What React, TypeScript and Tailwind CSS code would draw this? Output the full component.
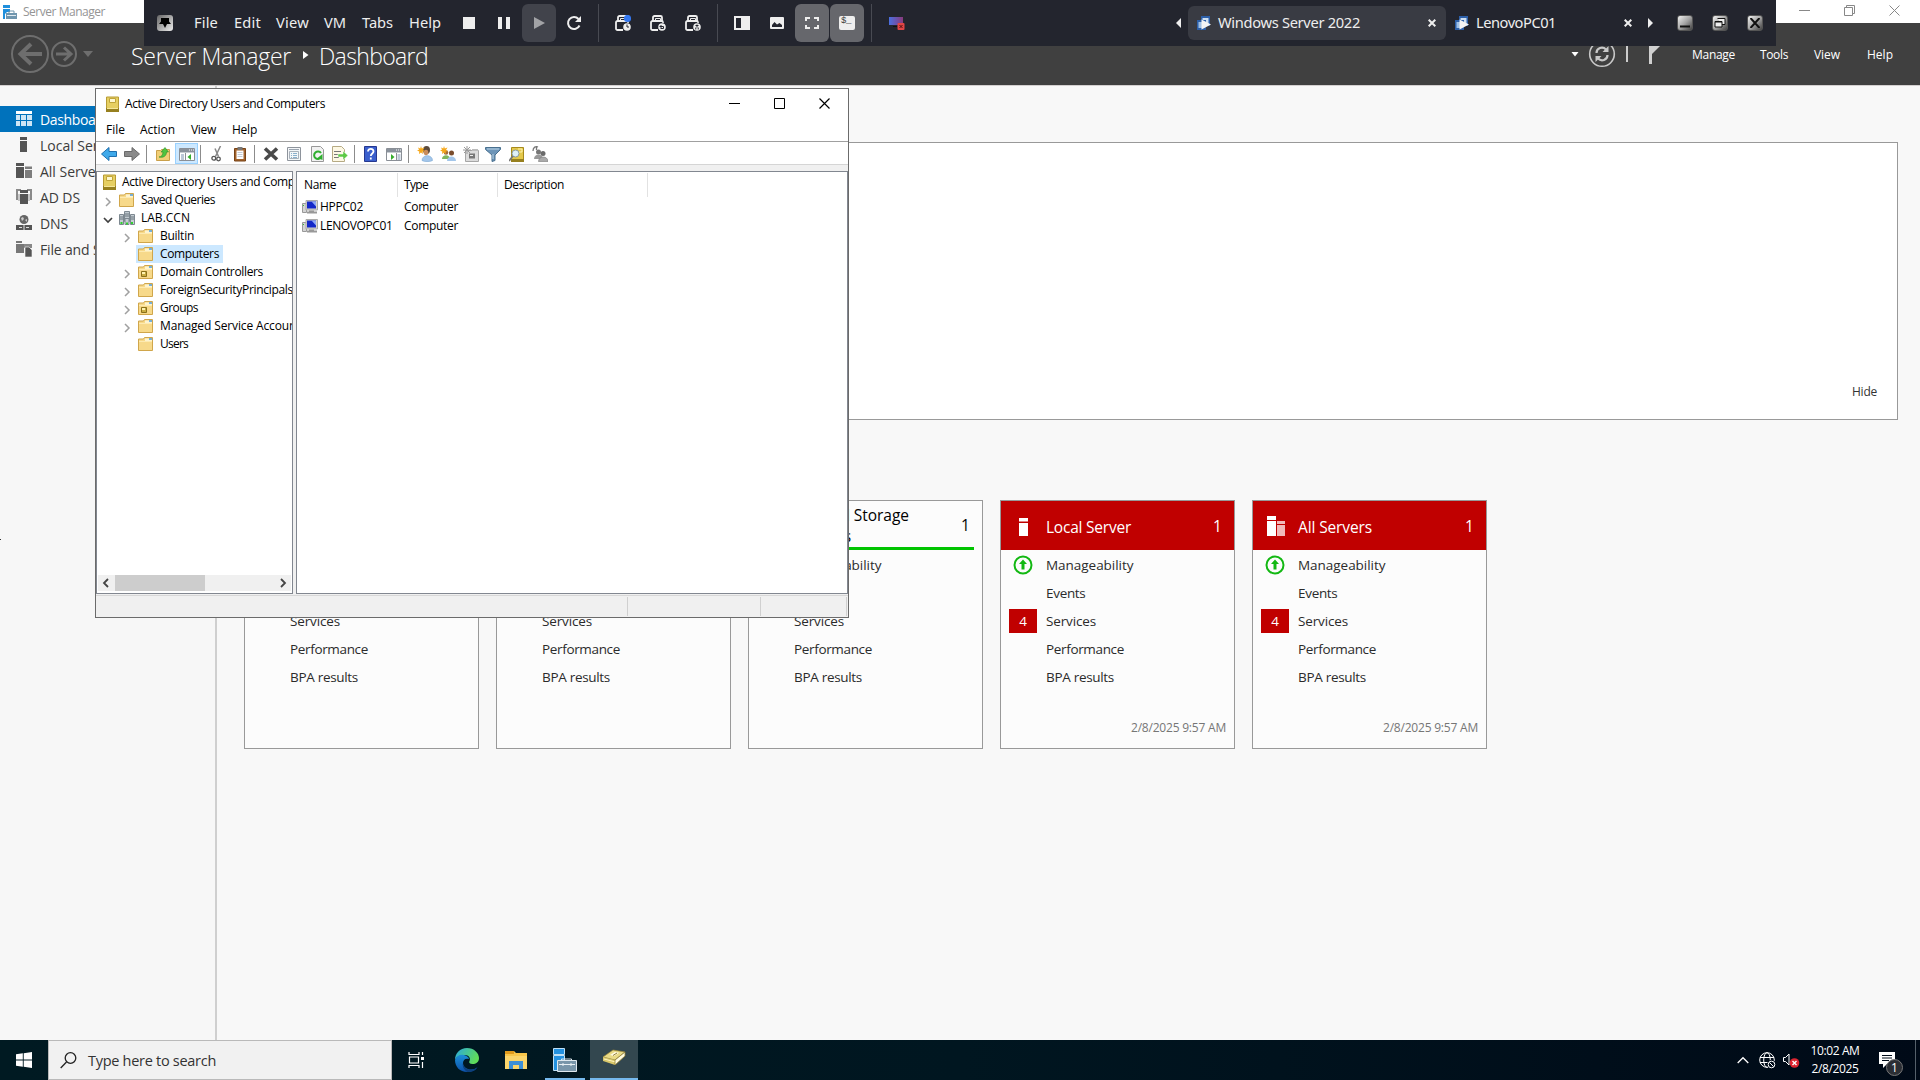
import React, { useLayoutEffect, useRef, useState } from "react";

/** Text whose tracking is adjusted so that it fills exactly `w` pixels. */
function Fit({ w, children, className = "" }: { w: number; children: string; className?: string }) {
  const ref = useRef<HTMLSpanElement>(null);
  const [ls, setLs] = useState(0);
  useLayoutEffect(() => {
    const el = ref.current;
    if (!el) return;
    el.style.letterSpacing = "0px";
    const natural = el.getBoundingClientRect().width;
    const v = (w - natural) / children.length;
    el.style.letterSpacing = v + "px";
    setLs(v);
  }, [w, children]);
  return (
    <span ref={ref} className={"inline-block shrink-0 whitespace-pre " + className} style={{ letterSpacing: ls }}>
      {children}
    </span>
  );
}

type IconProps = { children: React.ReactNode; w?: number; h?: number; className?: string };
const Svg = ({ children, w = 16, h = 16, className = "" }: IconProps) => (
  <svg width={w} height={h} viewBox={`0 0 ${w} ${h}`} fill="none" className={"shrink-0 " + className}>
    {children}
  </svg>
);

/* ---------- Server Manager ---------- */

const ServerManagerLogo = () => (
  <Svg w={14} h={14}>
    <path d="M0 0h7v3H0zM0 4h7v3H4L2 9v5H0z" fill="#1f8fdc" />
    <path d="M3 8h11v6H3z" fill="#6f95ad" />
    <path d="M6 8V6h5v2" stroke="#6f95ad" />
    <path d="M4 10.500h9" stroke="#dfe9ef" />
  </Svg>
);

const sideIcons = {
  dash: (
    <Svg>
      <path d="M0 4h4v5H0zM5 4h5v5H5zM11 4h5v5h-5zM0 10h4v5H0zM5 10h5v5H5zM11 10h5v5h-5z" fill="#cfe6f5" />
      <path d="M0 0h16v3H0z" fill="#fff" />
    </Svg>
  ),
  local: (
    <Svg>
      <path d="M4 0h7v3H4zM4 4h7v11H4z" fill="#555" />
    </Svg>
  ),
  all: (
    <Svg>
      <path d="M0 0h8v3H0zM0 4h8v11H0z" fill="#555" />
      <path d="M9 3.500h7V6H9zM9 7h7v8H9z" fill="#7d7d7d" />
    </Svg>
  ),
  ad: (
    <Svg>
      <path d="M0 0h5v2H2v9H0zM11 0h5v11h-2V2h-3z" fill="#8a8a8a" />
      <path d="M4 1h8v3H4zM4 5h8v10H4z" fill="#555" />
      <path d="M3 5v7M13 5v7" stroke="#999" />
    </Svg>
  ),
  dns: (
    <Svg>
      <circle cx="8" cy="4.500" r="4.500" fill="#666" />
      <path d="M5 3l2-1 1 2-2 2zM9 5l2-1v3z" fill="#ccc" />
      <path d="M0 9h16v6H0z" fill="#555" />
      <path d="M0 9.500h16" stroke="#f7f7f7" />
      <path d="M3 12.500h3M10 12.500h3M8 10v5" stroke="#ddd" />
    </Svg>
  ),
  file: (
    <Svg>
      <path d="M0 0h6v2h2v10H0z" fill="#777" />
      <path d="M0 2.500h8" stroke="#f7f7f7" />
      <path d="M8 3h8v4H8z" fill="#888" />
      <path d="M9 6h4l3 3v7H9z" fill="#555" stroke="#f7f7f7" strokeWidth=".6" />
    </Svg>
  ),
};

const sideItems: { label: string; w: number; icon: React.ReactNode; on?: boolean }[] = [
  { label: "Dashboard", w: 69, icon: sideIcons.dash, on: true },
  { label: "Local Server", w: 79, icon: sideIcons.local },
  { label: "All Servers", w: 68, icon: sideIcons.all },
  { label: "AD DS", w: 40, icon: sideIcons.ad },
  { label: "DNS", w: 28, icon: sideIcons.dns },
  { label: "File and Storage Services", w: 157, icon: sideIcons.file },
];

const UpArrow = () => (
  <Svg w={20} h={20}>
    <circle cx="10" cy="10" r="8.500" stroke="#12b812" strokeWidth="2" />
    <path d="M10 4.500l4 4.500h-2.500v5.500h-3V9H6z" fill="#12b812" />
  </Svg>
);

const rowDefs: [string, number][] = [
  ["Manageability", 87.5],
  ["Events", 39.5],
  ["Services", 50],
  ["Performance", 78],
  ["BPA results", 68],
];

function Tile({ title, w, red, icon, date }: { title: string[]; w: number[]; red?: boolean; icon?: React.ReactNode; date?: boolean }) {
  return (
    <div className="flex h-[249px] w-[235px] shrink-0 flex-col border border-[#999] bg-[#fcfcfc]">
      <div
        className={
          "flex h-[49px] shrink-0 items-center text-[15.500px] " +
          (red ? "bg-[#c00000] text-white" : "mx-2 border-b-[3px] border-[#00c400] text-black")
        }
      >
        <div className={red ? "flex w-[45px] pl-[14px]" : "w-[37px]"}>{icon}</div>
        <div className={"flex flex-1 flex-col items-start leading-[21px] " + (red ? "pt-[3px]" : "pt-1")}>
          {title.map((t, i) => (
            <Fit key={t} w={w[i]}>{t}</Fit>
          ))}
        </div>
        <span className={red ? "w-[21px] pt-[3px]" : "w-[13px] pt-[3px]"}>1</span>
      </div>
      <div className="text-[13.500px] text-[#2b2b2b]">
        {rowDefs.map(([t, rw], i) => (
          <div key={t} className={"flex h-7 items-center " + (i === 0 ? "mt-[1px]" : "")}>
            <div className="flex w-[45px] items-center pl-2">
              {i === 0 && <div className="pb-px pl-[4px]"><UpArrow /></div>}
              {i === 2 && red && (
                <div className="flex h-6 w-7 items-center justify-center bg-[#c00000] text-white">4</div>
              )}
            </div>
            <Fit w={rw}>{t}</Fit>
          </div>
        ))}
      </div>
      {date && (
        <div className="mt-auto flex h-[43px] justify-end pr-[8px] text-[12px] text-[#767676]">
          <Fit w={95} className="pt-[14px]">2/8/2025 9:57 AM</Fit>
        </div>
      )}
    </div>
  );
}

const CaptionButtons = () => (
  <div className="flex items-center gap-[34px] pb-[2px] pr-[20px]">
    <Svg w={11} h={11}><path d="M0 5.500h11" stroke="#888" /></Svg>
    <Svg w={11} h={11}><path d="M.5 2.500h8v8h-8zM2.500 2V.5h8v8H9" stroke="#888" /></Svg>
    <Svg w={11} h={11}><path d="M.5 .5l10 10M10.500 .5l-10 10" stroke="#888" /></Svg>
  </div>
);

function ServerManager() {
  return (
    <div className="flex h-[1040px] flex-col bg-[#f8f8f8]">
      <div className="flex h-[23px] items-center justify-between bg-white pl-[3px]">
        <div className="flex items-center gap-[6px] text-[12px] text-[#959595]">
          <ServerManagerLogo />
          <Fit w={82}>Server Manager</Fit>
        </div>
        <CaptionButtons />
      </div>
      <div className="flex h-[62px] shrink-0 items-center bg-[#404040] text-white">
        <Svg w={131} h={62}>
          <g stroke="#6e6e6e">
            <circle cx="30" cy="31" r="18" strokeWidth="2" />
            <circle cx="64" cy="31" r="12" strokeWidth="2" />
            <path d="M42 31H21M31 21l-10.500 10L31 41" strokeWidth="4" />
            <path d="M56 31h14M64 24.500l7 6.500-7 6.500" strokeWidth="3" />
          </g>
          <path d="M83 28h10l-5 6z" fill="#6e6e6e" />
        </Svg>
        <div className="flex w-[1437px] items-center pt-[4px] text-[23px] font-light">
          <Fit w={160}>Server Manager</Fit>
          <Svg w={28} h={10}><path d="M12 0l5.500 4-5.500 4z" fill="#fff" /></Svg>
          <Fit w={109}>Dashboard</Fit>
        </div>
        <Svg w={124} h={62}>
          <path d="M3.500 29h7L7 33.500z" fill="#fff" />
          <circle cx="34" cy="31" r="12.300" stroke="#c8c8c8" strokeWidth="1.600" />
          <path d="M28.500 30c0-5 6-7 9.500-3.500M39.500 32c0 5-6 7-9.500 3.500" stroke="#c8c8c8" strokeWidth="2.200" />
          <path d="M40.500 23v6h-6zM27.500 39v-6h6z" fill="#c8c8c8" />
          <path d="M59 23v16" stroke="#ccc" strokeWidth="2" />
          <path d="M81 22h12l-5 5-4 4v10h-3z" fill="#d0d0d0" />
        </Svg>
        <div className="flex pt-[2px] text-[12px]">
          <Fit w={43}>Manage</Fit>
          <Fit w={28} className="ml-[25px]">Tools</Fit>
          <Fit w={26} className="ml-[26px]">View</Fit>
          <Fit w={26} className="ml-[27px]">Help</Fit>
        </div>
      </div>
      <div className="flex min-h-0 flex-1 border-t border-[#d4d0d0]">
        <div className="flex w-[217px] shrink-0 flex-col border-r-2 border-[#cfcfcf] bg-[#f7f7f7] pt-5">
          {sideItems.map((s) => (
            <div
              key={s.label}
              className={"flex h-[26px] shrink-0 items-center pl-4 text-[14px] " + (s.on ? "bg-[#0072bc] text-white" : "text-[#3c3c3c]")}
            >
              <div className="w-6 pb-px">{s.icon}</div>
              <Fit w={s.w}>{s.label}</Fit>
            </div>
          ))}
          <div className="mt-[277px] h-px w-px bg-[#333]" />
        </div>
        <div className="flex flex-1 flex-col pl-[27px]">
          <div className="mr-[22px] mt-14 flex h-[278px] items-end justify-end border border-[#999] bg-white pb-[18px] pr-[20px] text-[12px] text-[#333]">
            <Fit w={25}>Hide</Fit>
          </div>
          <div className="mt-[80px] flex gap-[17px]">
            <Tile title={["AD DS"]} w={[42]} />
            <Tile title={["DNS"]} w={[30]} />
            <Tile title={["File and Storage", "Services"]} w={[115, 57]} />
            <Tile
              title={["Local Server"]}
              w={[85]}
              red
              date
              icon={<Svg w={22} h={20}><path d="M4 2h9v3.500H4zM4 7h9v13H4z" fill="#fff" /></Svg>}
            />
            <Tile
              title={["All Servers"]}
              w={[74]}
              red
              date
              icon={
                <Svg w={22} h={20}>
                  <path d="M0 0h9v4H0zM0 5h9v15H0z" fill="#fff" />
                  <path d="M10 5h8v3h-8zM10 9h8v11h-8z" fill="#f0baba" />
                </Svg>
              }
            />
          </div>
        </div>
      </div>
    </div>
  );
}

/* ---------- Active Directory Users and Computers ---------- */

const Book = () => (
  <Svg w={13} h={16}>
    <path d="M.5 1h12v14H.5z" fill="#e6cf62" stroke="#b89c34" />
    <path d="M0 12h13v4H0z" fill="#97801f" />
    <path d="M1 12.500h11" stroke="#f5e79a" />
    <path d="M3.500 2.500h6v4h-6z" fill="#fdf7cf" stroke="#c0a53a" />
  </Svg>
);
const Folder = ({ ou }: { ou?: boolean }) => (
  <Svg w={15} h={14}>
    <path d="M.5 2h5l1-1.500h8V13.500H.5z" fill="#f7d98a" stroke="#d0a64b" />
    <path d="M7 1.500h7V4H7z" fill="#fdf3cf" />
    <path d="M11 2h3" stroke="#4a9be0" strokeWidth="1.500" />
    <path d="M1 4.500h13" stroke="#fdeab0" />
    {ou && (
      <>
        <path d="M3.500 6.500h5v5h-5z" fill="#c9ac42" stroke="#8a701a" />
        <path d="M4 7h3v2H4z" fill="#fff3b0" />
      </>
    )}
  </Svg>
);
const Domain = () => (
  <Svg w={16} h={16}>
    <path d="M5.500 1.500h5v10h-5z" fill="#c2cbd1" stroke="#7d8890" />
    <path d="M.5 4.500h4v10h-4zM11.500 4.500h4v10h-4zM6 8.500h4v6H6z" fill="#c6ced3" stroke="#7d8890" />
    <path d="M1 7h3M1 9h3M12 7h3M12 9h3M6 4h4M6 6h4" stroke="#68747c" />
    <path d="M1.500 13h2M12 13h2M7 13.500h2" stroke="#2fd22f" strokeWidth="2" />
  </Svg>
);
const Pc = () => (
  <Svg w={16} h={14}>
    <path d="M.5 3.500h4v9h-4z" fill="#d4d4d4" stroke="#999" />
    <path d="M1.500 5v1" stroke="#2fc22f" />
    <path d="M4 .5h11.500v9.500H4z" fill="#d8d6ce" stroke="#aaa" />
    <path d="M5 1.500h9v7H5z" fill="#1428c8" />
    <path d="M9.500 1.500H14v5z" fill="#8fa8f5" />
    <path d="M7 10.500h5v1h3v2H5v-2h2z" fill="#999" />
  </Svg>
);
const Chevron = ({ open }: { open?: boolean }) => (
  <Svg w={10} h={10}>
    {open ? <path d="M1 3l4 4 4-4" stroke="#404040" strokeWidth="1.700" /> : <path d="M3 1l4 4-4 4" stroke="#a0a0a0" strokeWidth="1.500" />}
  </Svg>
);

const tree: { t: string; w: number; lvl: number; chev?: "open" | "closed"; icon: React.ReactNode; sel?: boolean }[] = [
  { t: "Saved Queries", w: 74, lvl: 1, chev: "closed", icon: <Folder /> },
  { t: "LAB.CCN", w: 49, lvl: 1, chev: "open", icon: <Domain /> },
  { t: "Builtin", w: 34, lvl: 2, chev: "closed", icon: <Folder /> },
  { t: "Computers", w: 59, lvl: 2, icon: <Folder />, sel: true },
  { t: "Domain Controllers", w: 103, lvl: 2, chev: "closed", icon: <Folder ou /> },
  { t: "ForeignSecurityPrincipals", w: 133, lvl: 2, chev: "closed", icon: <Folder /> },
  { t: "Groups", w: 38, lvl: 2, chev: "closed", icon: <Folder ou /> },
  { t: "Managed Service Accounts", w: 146, lvl: 2, chev: "closed", icon: <Folder /> },
  { t: "Users", w: 28, lvl: 2, icon: <Folder /> },
];

const Sep = ({ className = "" }: { className?: string }) => <div className={"h-[18px] w-px shrink-0 bg-[#8c8c8c] " + className} />;

const WinPane = ({ flip }: { flip?: boolean }) => (
  <Svg>
    <path d="M.5 2.500h15v12H.5z" fill="#fff" stroke="#8a8f96" />
    <path d="M1 3h14v3H1z" fill="#8a929c" />
    <path d="M10 4h1M12 4h1M14 4h1" stroke="#fff" />
    <path d="M1 6.500h14" stroke="#c7ccd2" />
    {flip ? (
      <><path d="M10.500 7v7" stroke="#8a8f96" /><path d="M11.500 9h3M11.500 11h3M11.500 13h3" stroke="#7b91b0" /><path d="M5 8l3.500 3L5 14z" fill="#35ad2d" /></>
    ) : (
      <><path d="M6.500 7v7" stroke="#8a8f96" /><path d="M2 9h3M2 11h3M2 13h3" stroke="#7b91b0" /><path d="M12 8v6l-3.500-3z" fill="#35ad2d" /></>
    )}
  </Svg>
);

const Star = () => <path d="M4 0l.8 2.500L7.500 1.500 6 4l2 1.200-2.500.3.5 2.500L4 6.500 2 8l.3-2.500L0 4.500l2-.8L1 1.500l2.300 1z" fill="#f6a81c" />;

function Toolbar() {
  return (
    <div className="flex h-[22px] items-center bg-white pl-[5px] pt-px">
      <Svg><path d="M.5 8L8 1.500V5.500h7.500v5H8v4z" fill="#3fa9ea" stroke="#1f6fae" /></Svg>
      <Svg className="ml-[7px]"><path d="M15.500 8L8 1.500V5.500H.5v5H8v4z" fill="#8a8a8a" stroke="#6a6a6a" /></Svg>
      <Sep className="ml-[6px]" />
      <Svg className="ml-[9px]">
        <path d="M.5 4.500h4l1-1h8v11H.5z" fill="#f1cf76" stroke="#caa04a" />
        <path d="M3 11c2 0 4-2 4-5H5l4-4.500L12.500 6h-2c0 4-3 6-7.500 5z" fill="#4fc440" stroke="#2d8c25" strokeWidth=".6" />
      </Svg>
      <div className="ml-[3px] flex h-[21px] w-[23px] items-center justify-center border border-[#99d1ff] bg-[#cce8ff]"><WinPane /></div>
      <Sep className="ml-[2px]" />
      <Svg className="ml-[9px]">
        <path d="M10.500 0L5.500 10.500M5 2.500l3.500 8" stroke="#888" strokeWidth="1.500" />
        <circle cx="3.800" cy="12.200" r="1.900" stroke="#555" strokeWidth="1.300" /><circle cx="8.500" cy="13" r="1.800" stroke="#555" strokeWidth="1.300" />
      </Svg>
      <Svg className="ml-[6px]">
        <path d="M2.500 2.500h11v12.500h-11z" fill="#a2622b" stroke="#774316" />
        <path d="M4.500 4.500h7v8.500h-7z" fill="#fff" /><path d="M5.500 1h5v3h-5z" fill="#777" />
        <path d="M5.500 6.500h5M5.500 8.500h5M5.500 10.500h5" stroke="#c5cbd5" />
      </Svg>
      <Sep className="ml-[6px]" />
      <Svg className="ml-[8px]"><path d="M2 2.500l12 11M14 2.500l-12 11" stroke="#4a4a4a" strokeWidth="3.600" /></Svg>
      <Svg className="ml-[7px]">
        <path d="M1.500 1.500h13v13h-13z" fill="#f4f6f8" stroke="#8e949c" />
        <path d="M3 3.500h10" stroke="#9aa4b0" />
        <path d="M3.500 5.500h9v7h-9z" stroke="#a9b1ba" />
        <path d="M5 7.500h1M7 7.500h4M5 9.500h1M7 9.500h4M5 11.500h1M7 11.500h4" stroke="#8ab0cc" />
      </Svg>
      <Svg className="ml-[8px]">
        <path d="M1.500 .5h9l3 3v12h-12z" fill="#f2f2f2" stroke="#999" />
        <path d="M11 11.500A3.800 3.800 0 1 1 11 7" stroke="#2fae2f" strokeWidth="2" /><path d="M12.500 8v6l-5-2z" fill="#2fae2f" />
      </Svg>
      <Svg className="ml-[6px]">
        <path d="M.5 .5h9l3 3v12H.5z" fill="#fdf8e4" stroke="#b6aa84" />
        <path d="M2 5.500h7M2 8.500h4M2 11.500h5" stroke="#777" />
        <path d="M6 8h5V5l5 4.500-5 4.500v-3H6z" fill="#5cc944" stroke="#fff" strokeWidth=".5" />
      </Svg>
      <Sep className="ml-[6px]" />
      <Svg className="ml-[9px]" w={14}>
        <path d="M.5 .5h12v15H.5z" fill="#3a5fcd" stroke="#26388f" />
        <path d="M4 5.500c0-3.500 5.500-3.500 5.500 0 0 2-2.700 2-2.700 4.500M6.800 11.500v2" stroke="#fff" strokeWidth="1.800" />
      </Svg>
      <div className="ml-[8px] flex"><WinPane flip /></div>
      <Sep className="ml-[6px]" />
      <Svg className="ml-[8px]">
        <ellipse cx="9.500" cy="4" rx="3.500" ry="4" fill="#5b4a3c" /><ellipse cx="9" cy="6.500" rx="2.300" ry="2.800" fill="#c98d5c" />
        <path d="M5 14.500c0-6.500 10.500-6.500 10.500 0-2 1.500-8.500 1.500-10.500 0z" fill="#a3c6ea" stroke="#6d9ccc" strokeWidth=".5" /><Star />
      </Svg>
      <Svg className="ml-[7px]">
        <circle cx="6" cy="6.500" r="2.300" fill="#a06a3c" /><path d="M2 13c0-5 8-5 8 0z" fill="#7fb55e" />
        <circle cx="11.500" cy="7" r="2.500" fill="#7a4c2c" /><path d="M7 15c0-6 9-6 9 0z" fill="#a3c6ea" /><Star />
      </Svg>
      <Svg className="ml-[7px]">
        <path d="M2.500 4.500h13v11h-13z" fill="#dcdcdc" stroke="#a6a6a6" /><path d="M9 3h6v2H9z" fill="#bbb" />
        <path d="M6 7.500h6v5H6z" fill="#777" /><path d="M7 9.500h3" stroke="#eee" />
        <path d="M4 0v8M0 4h8M1 1l6 6M7 1L1 7" stroke="#9a9a9a" />
      </Svg>
      <Svg className="ml-[6px]"><path d="M.5 1.500h15v2L10 9v5.500l-3 1V9L.5 3.500z" fill="#6d95b8" stroke="#49708f" /><path d="M2 3h12M8 8v5" stroke="#bcd4e6" /></Svg>
      <Svg className="ml-[8px]">
        <path d="M2.500 1.500h12v14h-12z" fill="#e3c84b" stroke="#a78a1c" /><path d="M2 13h13v3H2z" fill="#97801f" />
        <circle cx="6.500" cy="7.500" r="3.500" fill="#dff0f8" stroke="#8a9aa2" /><path d="M4 10l-4 5" stroke="#777" strokeWidth="1.800" /><path d="M9 3h4v3h-3" stroke="#fff3b0" />
      </Svg>
      <Svg className="ml-[7px]">
        <path d="M1 5c0-4 3-5 5-4M4.500 0v4" stroke="#777" strokeWidth="1.300" />
        <circle cx="6.500" cy="6" r="2.500" fill="#777" /><path d="M2 13c0-6 9-6 9 0z" fill="#999" />
        <circle cx="11" cy="7.500" r="2.500" fill="#6a6a6a" /><path d="M6.500 15.500c0-6 9.500-6 9.500 0z" fill="#aaa" stroke="#777" strokeWidth=".6" />
      </Svg>
    </div>
  );
}

function AducWindow() {
  return (
    <div className="absolute left-[95px] top-[88px] flex h-[530px] w-[754px] flex-col border border-[#6b6b6b] bg-[#f0f0f0] text-[12px] leading-4 text-black">
      <div className="flex h-[30px] items-center bg-white pb-px pl-[10px] pr-[18px]">
        <Book />
        <Fit w={200} className="ml-[6px]">Active Directory Users and Computers</Fit>
        <div className="ml-auto flex items-center gap-[34px] pb-px">
          <Svg w={11} h={11}><path d="M0 5.500h11" stroke="#000" /></Svg>
          <Svg w={11} h={11}><path d="M.5 .5h10v10H.5z" stroke="#000" /></Svg>
          <Svg w={11} h={11}><path d="M.5 .5l10 10M10.500 .5l-10 10" stroke="#000" strokeWidth="1.200" /></Svg>
        </div>
      </div>
      <div className="flex h-[22px] items-center bg-white pl-[10px]">
        <Fit w={19}>File</Fit>
        <Fit w={35} className="ml-[15px]">Action</Fit>
        <Fit w={25} className="ml-[16px]">View</Fit>
        <Fit w={25} className="ml-[16px]">Help</Fit>
      </div>
      <div className="border-y border-t-[#a0a0a0] border-b-[#d5d5d5]"><Toolbar /></div>
      <div className="mt-[6px] flex h-[423px] shrink-0 gap-[3px]">
        <div className="flex w-[197px] shrink-0 flex-col overflow-hidden border border-[#828790] bg-white p-px">
          <div className="flex h-[18px] shrink-0 items-center pl-[5px]">
            <Book />
            <Fit w={200} className="ml-[6px]">Active Directory Users and Computers</Fit>
          </div>
          {tree.map((r) => (
            <div key={r.t} className={"flex h-[18px] shrink-0 items-center " + (r.lvl === 1 ? "pl-[5px]" : "pl-[24px]")}>
              <div className="w-[14px] shrink-0 pt-[3px]">{r.chev && <Chevron open={r.chev === "open"} />}</div>
              <div className={"flex h-[18px] shrink-0 items-center pr-1 " + (r.sel ? "bg-[#cce8ff]" : "")}>
                <div className="w-[24px] pl-[2px]">{r.icon}</div>
                <Fit w={r.w}>{r.t}</Fit>
              </div>
            </div>
          ))}
          <div className="mb-[1px] mt-auto flex h-[16px] items-center bg-[#f0f0f0] px-[4px]">
            <Svg w={8} h={10}><path d="M6 1L2 5l4 4" stroke="#444" strokeWidth="1.800" /></Svg>
            <div className="ml-[5px] h-[16px] w-[90px] bg-[#cdcdcd]" />
            <Svg w={8} h={10} className="ml-auto"><path d="M2 1l4 4-4 4" stroke="#444" strokeWidth="1.800" /></Svg>
          </div>
        </div>
        <div className="flex flex-1 flex-col border border-[#828790] bg-white">
          <div className="mt-px flex h-6 items-center">
            <div className="flex h-full w-[101px] items-center border-r border-[#e2e2e2] pl-[7px]"><Fit w={32}>Name</Fit></div>
            <div className="flex h-full w-[100px] items-center border-r border-[#e2e2e2] pl-[6px]"><Fit w={24}>Type</Fit></div>
            <div className="flex h-full w-[150px] items-center border-r border-[#e2e2e2] pl-[6px]"><Fit w={60}>Description</Fit></div>
          </div>
          {([["HPPC02", 43], ["LENOVOPC01", 72.5]] as [string, number][]).map(([n, w]) => (
            <div key={n} className="flex h-[19px] items-center pl-[5px]">
              <Pc />
              <div className="w-[86px] pl-[2px]"><Fit w={w}>{n}</Fit></div>
              <Fit w={54}>Computer</Fit>
            </div>
          ))}
        </div>
      </div>
      <div className="mt-px flex flex-1 border-t border-[#d7d7d7] py-px">
        <div className="w-[532px] border-r border-[#d0d0d0]" />
        <div className="w-[133px] border-r border-[#d0d0d0]" />
        <div className="w-[86px] border-r border-[#d0d0d0]" />
      </div>
    </div>
  );
}

/* ---------- Virtual machine full-screen bar ---------- */

const Lock = ({ kind }: { kind: number }) => (
  <Svg>
    <path d="M3 6V2.500a1.500 1.500 0 0 1 1.500-1.500h6A1.500 1.500 0 0 1 12 2.500V6" stroke="#eee" strokeWidth="1.800" />
    <path d="M5.500 5V3.500h5V5" stroke="#eee" />
    <path d="M8 15H2.500A1.500 1.500 0 0 1 1 13.500v-6A1.500 1.500 0 0 1 2.500 6h9A1.500 1.500 0 0 1 13 7.500V8" stroke="#eee" strokeWidth="1.800" />
    <circle cx="12" cy="12" r="4.300" fill="#23252e" />
    <circle cx="12" cy="12" r="3.800" fill="#eee" />
    {kind === 0 && <><path d="M12 9.500V12h2" stroke="#23252e" /><circle cx="12.500" cy="3.500" r="3.600" fill="#3478f0" /></>}
    {kind === 1 && <path d="M10 11.500h3.500v2H10.500M11.500 10l-1.500 1.500 1.500 1.500" stroke="#23252e" />}
    {kind === 2 && <path d="M12 9.500v3M10.800 12.500v2M13.200 12.500v2M10.500 10.500h3" stroke="#23252e" />}
  </Svg>
);
const VmSep = ({ className = "" }: { className?: string }) => <div className={"h-[38px] w-px shrink-0 bg-[#484a52] " + className} />;
const TabIcon = ({ className = "" }: { className?: string }) => (
  <Svg className={className}>
    <path d="M5 1h9v10H5z" fill="#2c5fa8" /><path d="M6.500 3h6v6h-6z" fill="#cfe0f2" />
    <path d="M1 5h9v10H1z" fill="#2c5fa8" /><path d="M2.500 7h5v6h-5z" fill="#9fc0e6" />
    <path d="M5.500 4.500L15 9.500l-9.500 5z" fill="#f4f4f4" />
  </Svg>
);
const TabClose = ({ className }: { className: string }) => (
  <Svg w={8} h={8} className={className}><path d="M.7 .7l6.600 6.600M7.300 .7L.7 7.300" stroke="#eee" strokeWidth="2" /></Svg>
);
const CtlButton = ({ children }: { children: React.ReactNode }) => (
  <div className="flex h-4 w-4 items-center justify-center rounded-[3px] border border-[#555] bg-linear-to-br from-[#f2f2f2] via-[#a5a5a5] to-[#444]">{children}</div>
);

function VmBar() {
  return (
    <div className="absolute left-[144px] top-0 flex h-[46px] w-[1632px] items-center bg-[#23252e] font-['Noto_Sans',sans-serif] text-[14.670px] text-[#eee]">
      <div className="ml-[13px] flex h-4 w-4 shrink-0 items-center justify-center rounded-[3px] bg-linear-to-br from-[#666] via-[#aaa] to-[#eee]">
        <Svg w={12} h={14}><path d="M2 2h8v3.500l2 2.500H8l-2 4-2-4H0l2-2.500z" fill="#000" /></Svg>
      </div>
      <div className="flex pb-[2px]">
        <Fit w={24} className="ml-[21px]">File</Fit>
        <Fit w={27} className="ml-[16px]">Edit</Fit>
        <Fit w={33} className="ml-[15px]">View</Fit>
        <Fit w={22} className="ml-[15px]">VM</Fit>
        <Fit w={31} className="ml-[16px]">Tabs</Fit>
        <Fit w={32} className="ml-[16px]">Help</Fit>
      </div>
      <div className="ml-[22px] h-3 w-3 bg-[#eee]" />
      <Svg w={12} h={12} className="ml-[23px]"><path d="M0 0h4v12H0zM8 0h4v12H8z" fill="#eee" /></Svg>
      <div className="ml-[12px] flex h-[38px] w-[34px] items-center justify-center rounded-[6px] bg-[#41434b]">
        <Svg w={11} h={12}><path d="M0 0l11 6-11 6z" fill="#a2a3a6" /></Svg>
      </div>
      <Svg className="ml-[10px]">
        <path d="M13.500 10.500A6 6 0 1 1 12.500 4" stroke="#eee" strokeWidth="2" /><path d="M15 1v6H9z" fill="#eee" />
      </Svg>
      <VmSep className="ml-[16px]" />
      <div className="ml-[16px] flex gap-[19px]"><Lock kind={0} /><Lock kind={1} /><Lock kind={2} /></div>
      <VmSep className="ml-[16px]" />
      <Svg h={14} className="ml-[16px]"><path d="M0 0h16v14H0z" fill="#eee" /><path d="M2 2h5v10H2z" fill="#23252e" /></Svg>
      <Svg w={14} h={12} className="ml-[20px]">
        <rect width="14" height="12" rx="1" fill="#eee" /><path d="M2 10V8l2.500-3L7 7.500 9.500 6 12 8v2z" fill="#23252e" />
      </Svg>
      <div className="ml-[11px] flex h-[38px] w-[34px] items-center justify-center rounded-[6px] bg-[#66676c]">
        <Svg w={14} h={12}><path d="M1 4V1h4M9 1h4v3M13 8v3H9M5 11H1V8" stroke="#eee" strokeWidth="2" /></Svg>
      </div>
      <div className="ml-px flex h-[38px] w-[34px] items-center justify-center rounded-[6px] bg-[#66676c]">
        <div className="flex h-[14px] w-4 items-center rounded-[2px] bg-[#eee] pb-1 pl-[2px] font-['Liberation_Mono',monospace] text-[9px] leading-[10px] tracking-[-0.5px] text-[#333]">$_</div>
      </div>
      <VmSep className="ml-[7px]" />
      <Svg w={16} h={14} className="ml-[17px]">
        <defs><linearGradient id="scr"><stop stopColor="#4a6fe0" /><stop offset="1" stopColor="#8a3a7c" /></linearGradient></defs>
        <path d="M0 1h14v8H0z" fill="url(#scr)" /><path d="M4 10h4v1H4z" fill="#111" />
        <rect x="8.500" y="7" width="7" height="7" rx="1" fill="#e04545" /><path d="M10.500 9l3 3M13.500 9l-3 3" stroke="#501010" />
      </Svg>
      <Svg w={5} h={10} className="ml-[271px]"><path d="M5 0v10L0 5z" fill="#eee" /></Svg>
      <div className="ml-[7px] flex h-[34px] w-[258px] items-center rounded-[6px] bg-[#393b43] pl-[8px]">
        <TabIcon />
        <Fit w={142} className="ml-[6px] pb-[2px]">Windows Server 2022</Fit>
        <TabClose className="ml-auto mr-[10px]" />
      </div>
      <TabIcon className="ml-[8px]" />
      <Fit w={80} className="ml-[6px] pb-[2px]">LenovoPC01</Fit>
      <TabClose className="ml-[68px]" />
      <Svg w={5} h={10} className="ml-[16px]"><path d="M0 0v10l5-5z" fill="#eee" /></Svg>
      <div className="ml-auto mr-[13px] flex gap-[19px]">
        <CtlButton><Svg w={10} h={12}><path d="M0 9.500h10" stroke="#111" strokeWidth="2" /></Svg></CtlButton>
        <CtlButton>
          <Svg w={12} h={12}><path d="M3.500 1.500h7.500v6H8" fill="#eee" stroke="#111" /><path d="M1 4.500h7v5.500H1z" fill="#eee" stroke="#111" /><path d="M1 5h7" stroke="#111" /></Svg>
        </CtlButton>
        <CtlButton><Svg w={10} h={10}><path d="M.5 0l9 10M9.500 0l-9 10" stroke="#111" strokeWidth="2" /></Svg></CtlButton>
      </div>
    </div>
  );
}

/* ---------- Taskbar ---------- */

function Taskbar() {
  return (
    <div className="flex h-10 bg-linear-to-r from-[#001a22] via-[#001620] to-[#000a17] text-white">
      <div className="flex w-12 shrink-0 items-center justify-center">
        <Svg><path d="M0 2.300L6.800 1.300V7.500H0zM7.700 1.200L16 0v7.500H7.700zM0 8.400h6.800v6.300L0 13.700zM7.700 8.400H16V16l-8.300-1.200z" fill="#fff" /></Svg>
      </div>
      <div className="flex w-[344px] shrink-0 items-center border border-[#b9b9b9] bg-[#f1f1f1] pl-[11px]">
        <Svg w={17} h={17}><circle cx="10.500" cy="6" r="5.300" stroke="#222" strokeWidth="1.300" /><path d="M6.500 10L.7 16" stroke="#222" strokeWidth="1.300" /></Svg>
        <Fit w={128} className="ml-[11px] pt-px text-[14.500px] text-[#333]">Type here to search</Fit>
      </div>
      <div className="flex w-12 items-center justify-center">
        <Svg w={17} h={16}><path d="M1 0v2.500h10V0M1 16v-2.500h10V16M1.500 5h9v6h-9zM14.500 0v3M14.500 10v6" stroke="#fff" strokeWidth="1.200" /><path d="M13 5h3v3h-3z" fill="#fff" /></Svg>
      </div>
      <div className="flex w-[54px] items-center justify-center">
        <Svg w={24} h={24}>
          <defs>
            <linearGradient id="eg" x1="0" y1="0" x2="1" y2=".4"><stop stopColor="#2aa8e0" /><stop offset="1" stopColor="#5fdc5a" /></linearGradient>
            <linearGradient id="eb" x1="0" y1="0" x2="0" y2="1"><stop stopColor="#1b8fd8" /><stop offset="1" stopColor="#0c50a8" /></linearGradient>
          </defs>
          <path d="M0 12C0 5 5 0 12 0s12 5 12 10c0 4-3 6-6.500 6-3 0-4-1.500-3-3 1.500-3-1-6-4.500-6C5 7 1 9 0 12z" fill="url(#eg)" />
          <path d="M0 12c1-4 5-6 9-5 3 .5 5 2.500 5 4-4-1-6 1.500-6 4 0 4 4 6.500 8 6.500 3 0 4.500-1 6-2-2 3-5.500 4.500-10 4.500C5 24 0 19 0 12z" fill="url(#eb)" />
          <path d="M8 15c0 5 5 7 9 6.500 2 0 4-1 5.500-2.500-1 3-5 5-10 5C9 22 7 18 8 15z" fill="#0d3f7c" />
        </Svg>
      </div>
      <div className="flex w-[44px] items-center justify-center">
        <Svg w={22} h={20}>
          <path d="M0 1h9l2 2H22v16H0z" fill="#f8c64a" /><path d="M0 1h9v3H0z" fill="#e09a1c" /><path d="M0 6h22v13H0z" fill="#fbd56b" />
          <path d="M4 19v-8h14v8h-4v-4H8v4z" fill="#3d8fd6" />
        </Svg>
      </div>
      <div className="ml-[7px] flex w-[40px] items-center justify-center border-b-2 border-[#76b9ed] pt-px">
        <Svg w={24} h={24}>
          <path d="M.5 .5h11v6H.5zM.5 7.500h11v15H.5z" fill="#2492e0" stroke="#bfe0f5" />
          <path d="M8.500 12.500V11h10v1.500" stroke="#dfe9ef" /><path d="M4.500 12.500h19v11h-19z" fill="#7896aa" stroke="#dfe9ef" />
          <path d="M6 16.500h16M10 15v3M18 15v3" stroke="#e8f0f4" />
        </Svg>
      </div>
      <div className="ml-[5px] flex w-12 items-center justify-center border-b-2 border-[#76b9ed] bg-[#33474f]">
        <Svg w={24} h={16} className="mb-1">
          <path d="M1 8L11 1l12 2-10 8z" fill="#e9da86" stroke="#9b8636" strokeWidth=".7" />
          <path d="M1 8l12 3v5L1 12z" fill="#d9c76a" /><path d="M13 11L23 3v4l-10 9z" fill="#fffbe0" stroke="#8f7c34" strokeWidth=".8" />
          <path d="M8 6l5-3 4 .8-5 3.200z" fill="#fffbe6" /><path d="M11 6.500l4-2.500" stroke="#8f7c34" /><path d="M2 10l10.500 2.700" stroke="#fff6c0" />
        </Svg>
      </div>
      <div className="ml-auto flex items-center">
        <Svg w={12} h={8}><path d="M.7 7L6 1.700 11.300 7" stroke="#fff" strokeWidth="1.300" /></Svg>
        <Svg w={17} h={17} className="ml-[10px]">
          <g stroke="#fff"><circle cx="8" cy="8" r="7.300" /><ellipse cx="8" cy="8" rx="3.300" ry="7.300" /><path d="M1 5.500h14M1 10.500h14" /></g>
          <circle cx="12.500" cy="12.500" r="4.500" fill="#000c19" /><circle cx="12.500" cy="12.500" r="3.300" stroke="#fff" /><path d="M10.500 10.500l4 4" stroke="#fff" />
        </Svg>
        <Svg w={17} h={17} className="ml-[7px]">
          <path d="M.5 5.500h2L6 2v11L2.500 9.500h-2z" stroke="#fff" /><circle cx="11.500" cy="11" r="4.800" fill="#dc2430" />
          <path d="M9.500 9l4 4M13.500 9l-4 4" stroke="#fff" strokeWidth="1.400" />
        </Svg>
        <div className="ml-[10px] flex w-[50px] flex-col items-center text-[12px] leading-[18px]">
          <Fit w={49}>10:02 AM</Fit>
          <Fit w={47}>2/8/2025</Fit>
        </div>
        <div className="relative ml-[19px] h-10 w-[36px]">
          <Svg w={16} h={16} className="mt-[12px]"><path d="M0 0h16v12H8l-4 4v-4H0z" fill="#fff" /><path d="M3 3.500h10M3 6h10M3 8.500h7" stroke="#000c19" /></Svg>
          <div className="absolute left-[7px] top-[19px] flex h-[17px] w-[17px] items-center justify-center rounded-full border border-[#777] bg-[#2b2e34] text-[12px]">1</div>
        </div>
        <div className="mr-1 h-10 w-px bg-[#55606a]" />
      </div>
    </div>
  );
}

export default function App() {
  return (
    <div className="relative h-[1080px] w-[1920px] overflow-hidden font-['Open_Sans','Noto_Sans',sans-serif]">
      <ServerManager />
      <Taskbar />
      <AducWindow />
      <VmBar />
    </div>
  );
}
